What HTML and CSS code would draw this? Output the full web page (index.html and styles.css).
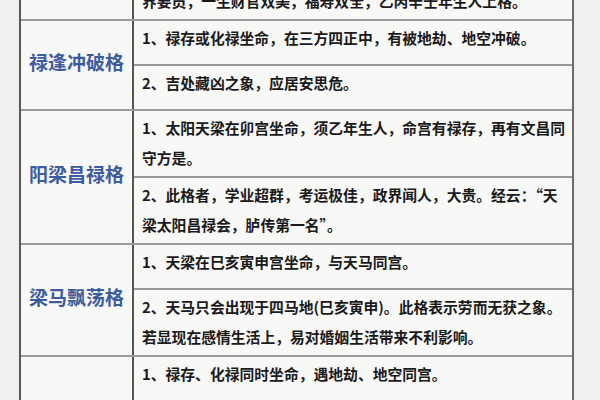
FILE: index.html
```html
<!DOCTYPE html>
<html lang="zh-CN">
<head>
<meta charset="utf-8">
<title>格局</title>
<link rel="stylesheet" href="styles.css">
</head>
<body>
<div class="page">
  <div class="table">
    <div class="group">
      <div class="label label-top">禄合鸳鸯格</div>
      <div class="items">
        <div class="item">2、此格者，主大富大贵，多为政界、商<br>界要员，一生财官双美，福寿双全，乙丙辛壬年生人上格。</div>
      </div>
    </div>
    <div class="group">
      <div class="label">禄逢冲破格</div>
      <div class="items">
        <div class="item">1、禄存或化禄坐命，在三方四正中，有被地劫、地空冲破。</div>
        <div class="item">2、吉处藏凶之象，应居安思危。</div>
      </div>
    </div>
    <div class="group">
      <div class="label">阳梁昌禄格</div>
      <div class="items">
        <div class="item">1、太阳天梁在卯宫坐命，须乙年生人，命宫有禄存，再有文昌同<br>守方是。</div>
        <div class="item">2、此格者，学业超群，考运极佳，政界闻人，大贵。经云：“天<br>梁太阳昌禄会，胪传第一名”。</div>
      </div>
    </div>
    <div class="group">
      <div class="label">梁马飘荡格</div>
      <div class="items">
        <div class="item">1、天梁在巳亥寅申宫坐命，与天马同宫。</div>
        <div class="item">2、天马只会出现于四马地(巳亥寅申)。此格表示劳而无获之象。<br>若显现在感情生活上，易对婚姻生活带来不利影响。</div>
      </div>
    </div>
    <div class="group">
      <div class="label">两重华盖格</div>
      <div class="items">
        <div class="item">1、禄存、化禄同时坐命，遇地劫、地空同宫。</div>
        <div class="item">2、此格者，空门之象，宜从事宗教、哲学<br>等方面的工作。</div>
      </div>
    </div>
  </div>
</div>
</body>
</html>
```

FILE: styles.css
```css
html, body {
  margin: 0;
  padding: 0;
  overflow: hidden;
}
body {
  background: #f0f0ef;
  font-family: "Noto Sans CJK SC", "Noto Sans", sans-serif;
}
.page {
  height: 400px;
  overflow: hidden;
}
.table {
  margin: -46px 0 0 19px;
  width: 555px;
  box-sizing: border-box;
  border-left: 2px solid #5a5a5a;
  border-right: 2px solid #6a6a6a;
  background: #f8f8f7;
}
.group {
  display: flex;
  border-bottom: 2px solid #9a9a9a;
}
.label {
  width: 113px;
  flex: none;
  border-right: 2px solid #555;
  display: flex;
  align-items: center;
  justify-content: center;
  padding-bottom: 7px;
  box-sizing: border-box;
  font-size: 19px;
  font-weight: 700;
  color: #3d5c9f;
  white-space: nowrap;
}
.label-top {
  align-items: flex-start;
  padding: 0;
  line-height: 20px;
}
.items {
  flex: 1;
  display: flex;
  flex-direction: column;
}
.item {
  box-sizing: border-box;
  min-height: 45px;
  padding: 2px 4px 3px 8px;
  border-bottom: 2px solid #9a9a9a;
  font-size: 14.8px;
  line-height: 30px;
  font-weight: 700;
  color: #1a1a1a;
  white-space: nowrap;
}
.item:last-child {
  border-bottom: none;
  min-height: 43px;
}
```
